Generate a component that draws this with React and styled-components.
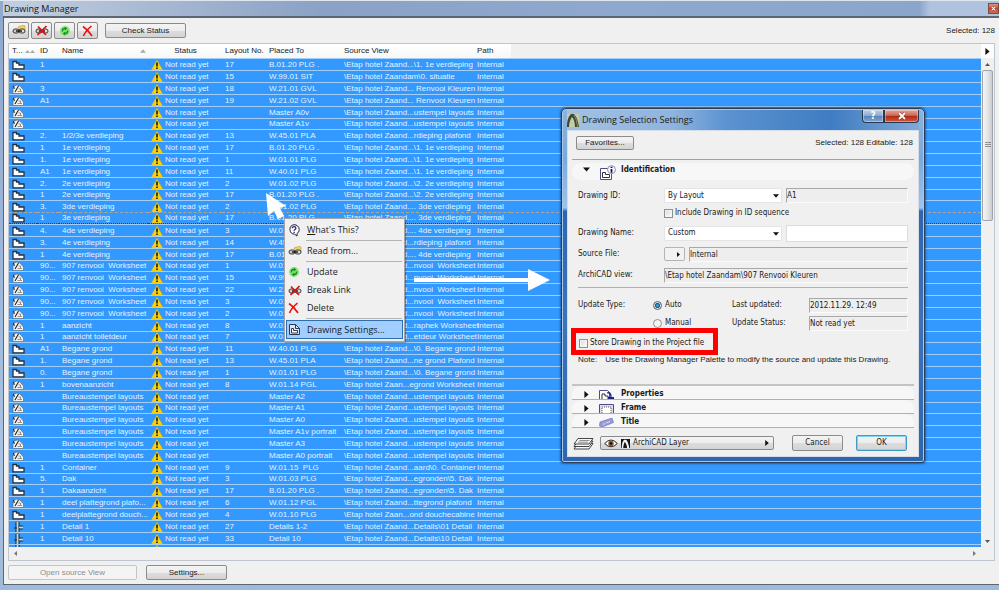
import React from 'react';
import styled, { createGlobalStyle, css } from 'styled-components';

const GlobalStyle = createGlobalStyle`
  *,
  *::before,
  *::after {
    box-sizing: border-box;
  }

  body {
    margin: 0;
    overflow: hidden;
    color: #1a1a1a;
    font-family: 'Liberation Sans', Arial, sans-serif;
    font-size: 8px;
    line-height: 10px;
  }

  button,
  input,
  select {
    font: inherit;
    color: inherit;
  }
`;

const uiFont = "'Open Sans', 'Noto Sans', sans-serif";
const dialogFont = "'DejaVu Sans Condensed', 'DejaVu Sans', sans-serif";

/* ---------- manager window ---------- */

const Desktop = styled.div`
  position: relative;
  height: 100vh;
`;

const ManagerWindow = styled.section`
  display: flex;
  flex-direction: column;
  height: 100%;
  padding: 0 0 5px 3px;
  border-top: 1px solid #dfe6ee;
  background: linear-gradient(#93abcf, #8fa9cf 3%, #a9c4e4 80%, #9fb9d9);
`;

const ManagerTitle = styled.header`
  display: flex;
  justify-content: space-between;
  flex: none;
  height: 15px;
  background: linear-gradient(
    90deg,
    #c3cfdf,
    #a9bad3 14%,
    #8ba2c6 32%,
    #8fa8cd 60%,
    #8ca5cb 92%,
    #afc2df 93%
  );

  h1 {
    margin: 0;
    padding: 1px;
    font-family: ${uiFont};
    font-size: 9px;
    font-weight: 400;
    line-height: 14px;
    color: #10151d;
  }
`;

const CloseBox = styled.button`
  display: flex;
  align-items: center;
  justify-content: center;
  align-self: center;
  width: 11px;
  height: 11px;
  padding: 0;
  border: 1px solid #7a4a44;
  background: linear-gradient(#dc9a84, #c8472b 50%, #d46a48);
`;

const ManagerBody = styled.div`
  display: flex;
  flex: 1;
  flex-direction: column;
  min-height: 0;
  padding: 4px 4px 4px;
  border: solid #5c6672;
  border-width: 2px 0 1px 1px;
  background: #f0f0f0;
`;

const buttonFace = css`
  border: 1px solid #8b8b8b;
  border-radius: 2px;
  background: linear-gradient(#f4f4f4, #ececec 50%, #dddddd 51%, #d3d3d3);
`;

const Toolbar = styled.div`
  display: flex;
  align-items: center;
  flex: none;
  height: 17px;
`;

const ToolButton = styled.button`
  ${buttonFace}
  display: flex;
  align-items: center;
  justify-content: center;
  width: 21px;
  height: 17px;
  margin-right: 2px;
  padding: 0;
`;

const TextButton = styled.button`
  ${buttonFace}
  width: ${({ $width }) => $width}px;
  height: ${({ $height }) => $height || 15}px;
  padding: 0;

  ${({ $default }) =>
    $default &&
    css`
      border-color: #3c9cc4;
      box-shadow: inset 0 0 0 1px #7fd6f2;
    `}

  &:disabled {
    border-color: #c4c4c4;
    background: #f4f4f4;
    color: #8d8d8d;
  }
`;

const CheckStatus = styled(TextButton)`
  margin-left: 5px;
`;

const SelectedCount = styled.span`
  margin-left: auto;
`;

/* ---------- drawing list ---------- */

const ListBox = styled.div`
  display: flex;
  flex: 1;
  flex-direction: column;
  min-height: 0;
  margin: 4px 0;
  border: 1px solid #c0c6cf;
`;

const ListArea = styled.div`
  display: flex;
  flex: 1;
  min-height: 0;
`;

const TableClip = styled.div`
  flex: 1;
  overflow: hidden;
`;

const Table = styled.table`
  width: 100%;
  border-spacing: 0;
  table-layout: fixed;

  th {
    height: 14px;
    padding: 0 0 0 3px;
    background: linear-gradient(#ffffff, #f6f7f8);
    font-weight: 400;
    text-align: left;
    white-space: nowrap;
  }

  th:last-child {
    background: #f0f0f0;
  }

  td {
    height: 12px;
    padding: 0 0 0 3px;
    border-top: 1px solid #a3cff7;
    background: #3399ff;
    color: #e6f2ff;
    line-height: 10px;
    white-space: pre;
  }

  tr:nth-child(6n) td {
    height: 11px;
  }

  td svg {
    display: block;
  }
`;

const Row = styled.tr`
  ${({ $focused }) =>
    $focused &&
    css`
      && td {
        border-top: 1px dashed #b3a58c;
        border-bottom: 1px dotted #1d3f68;
      }
    `}
`;

const HeadCell = styled.span`
  display: flex;
  align-items: center;
  justify-content: ${({ $align }) => $align || 'flex-start'};
  gap: 2px;
  padding-right: 2px;
`;

const SortMarks = styled.span`
  display: flex;
`;

const StatusCell = styled.span`
  display: flex;
  align-items: center;
  gap: 2px;
`;

const ScrollColumn = styled.div`
  display: flex;
  flex-direction: column;
  align-items: center;
  width: 13px;
  background: #f0f0f0;
`;

const PopupArrow = styled.button`
  display: flex;
  align-items: center;
  justify-content: center;
  width: 13px;
  height: 14px;
  padding: 0;
  border: 0;
  background: #fcfcfc;
`;

const ScrollArrow = styled.button`
  display: flex;
  align-items: center;
  justify-content: center;
  width: 13px;
  height: 12px;
  padding: 0;
  border: 0;
  background: none;
`;

const Thumb = styled.div`
  display: flex;
  align-items: center;
  justify-content: center;
  width: 11px;
  height: 30%;
  margin-bottom: auto;
  border: 1px solid #a0a4aa;
  border-radius: 2px;
  background: linear-gradient(90deg, #f5f5f5, #e4e5e6 50%, #cbcdd0);
`;

const HScroll = styled.div`
  display: flex;
  justify-content: space-between;
  flex: none;
  height: 13px;
  padding-right: 13px;
`;

const BottomBar = styled.div`
  display: flex;
  flex: none;
  gap: 9px;
`;

/* ---------- context menu ---------- */

const ContextMenu = styled.ul`
  position: absolute;
  top: 218px;
  left: 284px;
  width: 121px;
  margin: 0;
  padding: 2px 1px;
  border: 1px solid #a5a5a5;
  background: #f0f0f0;
  box-shadow: 1px 1px 1px rgba(0, 0, 0, 0.25);
  font-family: ${uiFont};
  font-size: 9px;
  list-style: none;
`;

const MenuItem = styled.li`
  button {
    display: flex;
    align-items: center;
    width: 100%;
    height: ${({ $active }) => ($active ? 19 : 18)}px;
    padding: 0 1px;
    border: 1px solid transparent;
    background: none;
    text-align: left;
    white-space: nowrap;

    ${({ $active }) =>
      $active &&
      css`
        border-color: #2f6fb0;
        background: #a0cfff;
      `}
  }
`;

const MenuIcon = styled.span`
  display: flex;
  flex: none;
  width: 19px;
`;

const MenuRule = styled.li`
  height: 1px;
  margin: 1px 1px 1px 20px;
  background: #b4b4b4;
`;

const Pointer = styled.svg`
  position: absolute;
  top: 193px;
  left: 266px;
`;

const BigArrow = styled.svg`
  position: absolute;
  top: 269px;
  left: 414px;
`;

/* ---------- settings dialog ---------- */

const Dialog = styled.section`
  position: absolute;
  top: 108px;
  left: 561px;
  width: 364px;
  padding: 0 5px 5px;
  border: 1px solid #2b3d57;
  border-radius: 5px 5px 3px 3px;
  background: linear-gradient(
    #8db2dc,
    #78aae0 14%,
    #9cc3ee 28%,
    #2c66b0 29%,
    #3b74bb 60%,
    #2c66b0
  );
  box-shadow: inset 0 0 0 1px #a9c9ec, 0 0 2px 1px rgba(10, 40, 80, 0.5);
  font-family: ${dialogFont};
`;

const DialogTitle = styled.header`
  display: flex;
  align-items: center;
  gap: 3px;
  height: 20px;
  margin-top: 1px;
  background: linear-gradient(
    90deg,
    #a3c0e2,
    #8fb4df 30%,
    #5c93d0 45%,
    #3f7cc2 75%,
    #7fa9da
  );

  h2 {
    margin: 0;
    font-family: ${uiFont};
    font-size: 9px;
    font-weight: 400;
    line-height: 14px;
  }
`;

const WindowButtons = styled.div`
  display: flex;
  align-self: flex-start;
  margin-left: auto;
`;

const WindowButton = styled.button`
  display: flex;
  align-items: center;
  justify-content: center;
  width: ${({ $close }) => ($close ? 35 : 22)}px;
  height: 13px;
  padding: 0;
  border: 1px solid #26374f;
  border-top: 0;
  border-radius: ${({ $close }) => ($close ? '0 0 4px 0' : '0 0 0 4px')};
  background: ${({ $close }) =>
    $close
      ? 'linear-gradient(#e0a49a, #cf6a58 45%, #b02a16 50%, #cf5a3a)'
      : 'linear-gradient(#b9cde6, #8fb0d6 45%, #5a85b8 50%, #7fa6d2)'};
  box-shadow: inset 0 0 0 1px rgba(255, 255, 255, 0.35);
  color: #ffffff;
  font-size: 10px;
  font-weight: 700;
  line-height: 10px;
`;

const DialogBody = styled.div`
  padding: 5px 4px 2px;
  border: 1px solid #d5dde8;
  background: #f0f0f0;
`;

const DialogTop = styled.div`
  display: flex;
  align-items: center;
  justify-content: space-between;
  padding: 0 1px 9px 4px;
  border-bottom: 1px solid #a2a2a2;
  font-family: 'Liberation Sans', Arial, sans-serif;
`;

const SectionHeader = styled.button`
  display: flex;
  align-items: center;
  width: 100%;
  height: ${({ $open }) => ($open ? 17 : 14)}px;
  margin: ${({ $open }) => ($open ? '3px 0 8px' : '0')};
  padding: ${({ $open }) => ($open ? '0 0 4px 11px' : '3px 0 0 11px')};
  border: 0;
  border-bottom: ${({ $open }) => ($open ? '0' : '1px solid #b0b0b0')};
  border-radius: ${({ $open }) => ($open ? '9px' : '9px 9px 0 0')};
  background: #f7f7f7;
  font-weight: 700;
  text-align: left;
`;

const SectionIcon = styled.span`
  display: flex;
  flex: none;
  width: 22px;
  margin-left: 9px;
  margin-bottom: ${({ $open }) => ($open ? '-6px' : '0')};
`;

const Form = styled.div`
  padding: 0 6px;
`;

const Field = styled.div`
  display: flex;
  align-items: center;
  gap: 4px;
  height: ${({ $height }) => $height || 20}px;
`;

const FieldLabel = styled.label`
  flex: none;
  width: 82px;
`;

const Combo = styled.div`
  position: relative;
  flex: none;
  width: 118px;

  select {
    display: block;
    width: 100%;
    height: 15px;
    padding: 0 16px 0 3px;
    border: 1px solid #e4e4e4;
    border-radius: 1px;
    appearance: none;
    background: #ffffff;
  }

  svg {
    position: absolute;
    top: 5px;
    right: 3px;
    pointer-events: none;
  }
`;

const TextInput = styled.input`
  flex: 1;
  min-width: 0;
  height: ${({ readOnly }) => (readOnly ? 15 : 17)}px;
  padding: 0;
  border: 1px solid #dcdcdc;
  background: #ffffff;

  ${({ readOnly }) =>
    readOnly &&
    css`
      border-color: #a8a8a8 #fbfbfb #fbfbfb #a8a8a8;
      background: #eeeeee;
    `}
`;

const BrowseButton = styled(TextButton)`
  display: flex;
  flex: none;
  align-items: center;
  justify-content: flex-end;
  padding: 0 3px;
  border-color: #b4b4b4;
  background: #f2f2f2;
`;

const Check = styled.label`
  display: flex;
  align-items: center;
  gap: 2px;
  white-space: nowrap;

  input {
    width: 9px;
    height: 9px;
    margin: 0;
    border: 1px solid #8e8f8f;
    appearance: none;
    background: linear-gradient(135deg, #d5d8dc, #ffffff);
    box-shadow: inset 0 0 0 1px #f4f4f4;
  }
`;

const IndentedCheck = styled(Check)`
  height: 20px;
  margin-left: 86px;
`;

const Highlight = styled.div`
  width: 147px;
  margin: -4px 0 0 -7px;
  padding: 5px 3px 2px;
  border: 5px solid #ff0000;
`;

const Rule = styled.hr`
  height: 1px;
  margin: 2px 0 8px;
  border: 0;
  background: #b0b0b0;
`;

const UpdateGrid = styled.div`
  display: grid;
  grid-template-columns: 75px 79px 77px 1fr;
  grid-auto-rows: 18px;
  align-items: center;
`;

const Radio = styled.label`
  display: flex;
  grid-column: 2;
  align-items: center;
  gap: 3px;

  input {
    width: 9px;
    height: 9px;
    margin: 0;
    border: 1px solid #8e8f8f;
    border-radius: 50%;
    appearance: none;
    background: #f4f4f4;
  }

  input:checked {
    border-color: #4f6576;
    background: radial-gradient(#4fb4e6, #17618f 45%, #dfe8ee 60%);
  }
`;

const Note = styled.p`
  display: flex;
  gap: 8px;
  margin: 0;
  padding-bottom: 19px;
  font-family: 'Liberation Sans', Arial, sans-serif;
  white-space: nowrap;
`;

const Sections = styled.div`
  border-top: 2px solid #c4c4c4;
`;

const DialogFooter = styled.footer`
  display: flex;
  align-items: center;
  padding: 7px 7px 3px 1px;
`;

const LayerButton = styled.button`
  ${buttonFace}
  display: flex;
  align-items: center;
  gap: 3px;
  width: 174px;
  height: 14px;
  margin: 0 18px 0 6px;
  padding: 0 3px;

  svg:last-child {
    margin-left: auto;
  }
`;

const FooterButton = styled(TextButton)`
  & + & {
    margin-left: auto;
  }
`;

/* ---------- icons ---------- */

const PlanIcon = () => (
  <svg width="13" height="10" viewBox="0 0 13 10">
    <path
      d="M1 1.500h3.500V3H7v2h5v3.800H1z"
      fill="#fff"
      stroke="#27313c"
      strokeWidth="1.300"
    />
  </svg>
);

const SheetIcon = () => (
  <svg width="13" height="10" viewBox="0 0 13 10">
    <path d="M1 2.500L5 1l3 1 3.500 4v3.500H1z" fill="#f6f4ee" stroke="#5c5c5c" strokeWidth=".6" />
    <path d="M1.500 2l.8 3M3 8l3.500-6" stroke="#222" strokeWidth="1.100" fill="none" />
    <path d="M5.500 7.500h4.500M6.500 5h2v2" stroke="#6a6a6a" strokeWidth=".7" fill="none" />
  </svg>
);

const DetailIcon = () => (
  <svg width="13" height="10" viewBox="0 0 13 10">
    <path d="M4 0v10M7 0v10" stroke="#30302a" strokeWidth="1.200" />
    <path d="M5.500 0v10" stroke="#d9d3ae" strokeWidth="1.600" />
    <path d="M7 4h4M7 7h4M2 6h3" stroke="#30302a" strokeWidth="1" />
    <path d="M7 5.500h4" stroke="#d9d3ae" strokeWidth="1.400" />
  </svg>
);

const WarningIcon = () => (
  <svg width="12" height="10" viewBox="0 0 12 10">
    <path d="M6 0l5.700 10H.3z" fill="#f9d312" stroke="#c9a20c" strokeWidth=".4" />
    <path d="M6 2.600v4M6 7.400v1.500" stroke="#1a1a00" strokeWidth="1.600" />
  </svg>
);

const typeIcons = { plan: PlanIcon, sheet: SheetIcon, detail: DetailIcon };

const ChainIcon = ({ folder, broken }) => (
  <svg width="14" height="11" viewBox="0 0 14 11">
    {folder && (
      <path d="M6 2l2-1h2l1-1 2 1v5l-5 1z" fill="#f3d35f" stroke="#a98b2a" strokeWidth=".5" />
    )}
    <rect x="1" y="4" width="6" height="4" rx="2" fill="#ccc" stroke="#3a3a3a" />
    <rect x="7" y="4" width="6" height="4" rx="2" fill="#ddd" stroke="#3a3a3a" />
    <path d="M4 6h6" stroke="#111" strokeWidth="1.400" />
    {broken && (
      <path d="M3 1.500l8 8.500M11.500 1l-9 9" stroke="#e01212" strokeWidth="1.700" />
    )}
  </svg>
);

const UpdateIcon = () => (
  <svg width="12" height="12" viewBox="0 0 12 12">
    <circle cx="6" cy="6" r="5" fill="#86e86e" />
    <path
      d="M3.500 6.500V5.200Q3.500 3.500 6 3.500M8.500 5.500v1.300Q8.500 8.500 6 8.500"
      fill="none"
      stroke="#1a8a2a"
      strokeWidth="1.400"
    />
    <path d="M5.800 1.500l2.500 2-2.500 2zM6.200 6.500l-2.500 2 2.500 2z" fill="#1a8a2a" />
  </svg>
);

const DeleteIcon = () => (
  <svg width="12" height="12" viewBox="0 0 12 12">
    <path d="M1 1.500c3 2 6 5 9 9.500" stroke="#e81010" strokeWidth="1.600" fill="none" />
    <path d="M9.500 1C6.500 3.500 3 7 1.500 11" stroke="#e81010" strokeWidth="1.600" fill="none" />
  </svg>
);

const HelpIcon = () => (
  <svg width="13" height="13" viewBox="0 0 13 13">
    <path
      d="M6 .7a5 4.800 0 015.200 4.800c0 2-1 3.300-2.200 4v2.600L6.700 10.200A5 4.800 0 016 .7z"
      fill="#fff"
      stroke="#222"
    />
    <path
      d="M4.300 4.200c0-2 3.600-2 3.600 0 0 1.300-1.800 1.300-1.800 2.500M6.100 7.700v1.200"
      fill="none"
      stroke="#26268f"
      strokeWidth="1.300"
    />
  </svg>
);

const InfoIcon = () => (
  <svg width="18" height="16" viewBox="0 0 18 16">
    <path d="M1.500 3.500h11v11h-11z" fill="#fff" stroke="#4c4c86" />
    <path d="M3.500 7.500h3v2h4v3h-7z" fill="none" stroke="#333" />
    <circle cx="12.500" cy="4.700" r="4" fill="#f4f4ff" stroke="#7777b8" strokeWidth=".8" />
    <path d="M12.500 4v3.700M12.500 1.800v1.300" stroke="#111" strokeWidth="1.700" />
  </svg>
);

const DrawingIcon = () => (
  <svg width="13" height="13" viewBox="0 0 13 13">
    <path d="M1.500 1.500h6l4 4v6h-10z" fill="#dce8f8" stroke="#2c3a52" />
    <path d="M7.500 1.500v4h4" fill="none" stroke="#2c3a52" />
    <path d="M3.500 5.500h2v2h4v2.500h-6z" fill="#fff" stroke="#2c3a52" />
  </svg>
);

const PropertiesIcon = () => (
  <svg width="15" height="9" viewBox="0 0 15 9">
    <path d="M.5 9V.5h8l2 2V9" fill="#fff" stroke="#4c4c96" />
    <path d="M3 9V4h3v2h3v3" fill="none" stroke="#333" />
    <path d="M8 3c3-1 4 1 4 4" fill="none" stroke="#22228a" strokeWidth="1.300" />
    <path d="M9 7h6v2H9z" fill="#22228a" />
  </svg>
);

const FrameIcon = () => (
  <svg width="15" height="9" viewBox="0 0 15 9">
    <path d="M.5 9V.5h14V9" fill="#dcdcf2" stroke="#4c4c86" />
    <path d="M3 9V3h9v6" fill="#fff" stroke="#555" strokeDasharray="1 1" />
  </svg>
);

const TitleIcon = () => (
  <svg width="15" height="9" viewBox="0 0 15 9">
    <path d="M1 4l12-4 1.500 4.500L3 9 .5 8z" fill="#9a9ad8" stroke="#7474b8" strokeWidth=".7" />
    <path d="M4 6.500l2-1M7 5l4-1.500" stroke="#dedef6" />
  </svg>
);

const LayersIcon = () => (
  <svg width="21" height="13" viewBox="0 0 21 13">
    <path d="M5 6.500h15l-4 5.500H1z" fill="#f6f6f6" stroke="#333" strokeWidth=".9" />
    <path d="M5 4h15l-4 5.500H1z" fill="#f6f6f6" stroke="#333" strokeWidth=".9" />
    <path d="M5 1.500h15l-4 5.500H1z" fill="#f6f6f6" stroke="#333" strokeWidth=".9" />
    <path d="M6.500 3.500h10M5 5.200h10" stroke="#777" strokeWidth=".8" />
  </svg>
);

const EyeIcon = () => (
  <svg width="14" height="9" viewBox="0 0 14 9">
    <path d="M.7 4.500Q7-2.500 13.300 4.500 7 11 .7 4.500z" fill="#fff" stroke="#222" />
    <circle cx="7" cy="4.500" r="2.700" fill="#8a5a22" />
    <circle cx="7" cy="4.500" r="1.300" fill="#111" />
  </svg>
);

const ArchIcon = () => (
  <svg width="9" height="9" viewBox="0 0 12 12">
    <path d="M0 0h12v12H0z" fill="#151515" />
    <path d="M1 12C1 7 2 3 4 1h3c2 2 3 6 4 11H8C8 9 7 6 5 4 4 6 3 9 3 12z" fill="#f4f4f4" />
  </svg>
);

const AppIcon = () => (
  <svg width="12" height="13" viewBox="0 0 12 13">
    <path d="M0 0h12v13H0z" fill="#c3ccab" />
    <path d="M0 13C0 7 1 3 4 0h3c3 3 4 7 5 13H8C8 9 7 5 5 3 3 6 2 9 2 13z" fill="#3d4a2c" />
    <path d="M7 1c2 3 3 7 3.500 12" fill="none" stroke="#98a57a" strokeWidth=".8" />
  </svg>
);

const Triangle = ({ dir = 'down', size = 5, color = '#111' }) => {
  const shapes = {
    down: 'M0 2h10L5 8z',
    right: 'M2 0v10l6-5z',
    left: 'M8 0v10L2 5z',
    up: 'M0 8h10L5 2z',
  };
  return (
    <svg width={size} height={size} viewBox="0 0 10 10">
      <path d={shapes[dir]} fill={color} />
    </svg>
  );
};

const Cross = ({ size = 8 }) => (
  <svg width={size} height={size} viewBox="0 0 8 8">
    <path d="M1 1l6 6M7 1L1 7" stroke="#7c2a20" strokeWidth="2.800" />
    <path d="M1 1l6 6M7 1L1 7" stroke="#fff" strokeWidth="1.800" />
  </svg>
);

const Grip = () => (
  <svg width="6" height="6" viewBox="0 0 6 6">
    <path d="M0 .5h6M0 2.500h6M0 4.500h6" stroke="#8c9096" />
  </svg>
);

/* ---------- data ---------- */

const etap = (rest, head = 'Zaand') => `\\Etap hotel ${head}...${rest}`;
const tempel = (placed, name = 'Bureaustempel layouts') => [
  'sheet',
  '',
  name,
  '',
  placed,
  etap('ustempel layouts'),
];
const renvooi = (no, placed) => [
  'sheet',
  '90...',
  '907 renvooi  Worksheet',
  no,
  placed,
  etap('nvooi  Worksheet'),
];

// type, id, name, layout no., placed to, source view
const drawings = [
  ['plan', '1', '', '17', 'B.01.20 PLG .', etap('\\1. 1e verdieping')],
  ['plan', '', '', '15', 'W.99.01 SIT', '\\Etap hotel Zaandam\\0. situatie'],
  ['sheet', '3', '', '18', 'W.21.01 GVL', etap(' Renvooi Kleuren')],
  ['sheet', 'A1', '', '19', 'W.21.02 GVL', etap(' Renvooi Kleuren')],
  tempel('Master A0v', ''),
  tempel('Master A1v', ''),
  ['plan', '2.', '1/2/3e verdieping', '13', 'W.45.01 PLA', etap('rdieping plafond')],
  ['plan', '1', '1e verdieping', '17', 'B.01.20 PLG .', etap('\\1. 1e verdieping')],
  ['plan', '1.', '1e verdieping', '1', 'W.01.01 PLG', etap('\\1. 1e verdieping')],
  ['plan', 'A1', '1e verdieping', '11', 'W.40.01 PLG', etap('\\1. 1e verdieping')],
  ['plan', '2.', '2e verdieping', '2', 'W.01.02 PLG', etap('\\2. 2e verdieping')],
  ['plan', '1', '2e verdieping', '17', 'B.01.20 PLG .', etap('\\2. 2e verdieping')],
  ['plan', '3.', '3de verdieping', '2', 'W.01.02 PLG', etap('. 3de verdieping')],
  ['plan', '1', '3e verdieping', '17', 'B.01.20 PLG', etap('. 3de verdieping')],
  ['plan', '4.', '4de verdieping', '3', 'W.01.03 PLG', etap('. 4de verdieping')],
  ['plan', '3.', '4e verdieping', '14', 'W.45.02 PLA', etap('rdieping plafond')],
  ['plan', '1', '4e verdieping', '17', 'B.01.20 PLG', etap('. 4de verdieping')],
  renvooi('1', 'W.01.01 PLG'),
  renvooi('15', 'W.99.01 SIT'),
  renvooi('22', 'W.21.05 GVL'),
  renvooi('3', 'W.01.03 PLG'),
  renvooi('2', 'W.01.02 PLG'),
  ['sheet', '1', 'aanzicht', '8', 'W.01.14 PGL', etap('raphek Worksheet')],
  ['sheet', '1', 'aanzicht toiletdeur', '7', 'W.01.13 PGL', etap('etdeur Worksheet')],
  ['plan', 'A1', 'Begane grond', '11', 'W.40.01 PLG', etap('\\0. Begane grond')],
  ['plan', '1.', 'Begane grond', '13', 'W.45.01 PLA', etap('ne grond Plafond')],
  ['plan', '0.', 'Begane grond', '1', 'W.01.01 PLG', etap('\\0. Begane grond')],
  ['sheet', '1', 'bovenaanzicht', '8', 'W.01.14 PGL', etap('egrond Worksheet', 'Zaan')],
  tempel('Master A2'),
  tempel('Master A1'),
  tempel('Master A0'),
  tempel('Master A1v portrait'),
  tempel('Master A3'),
  tempel('Master A0 portrait'),
  ['plan', '1', 'Container', '9', 'W.01.15  PLG', etap('aard\\0. Container')],
  ['plan', '5.', 'Dak', '3', 'W.01.03 PLG', etap('egronden\\5. Dak')],
  ['plan', '1', 'Dakaanzicht', '17', 'B.01.20 PLG .', etap('egronden\\5. Dak')],
  ['sheet', '1', 'deel plattegrond plafo...', '6', 'W.01.12 PGL', etap('ttegrond plafond')],
  ['plan', '1', 'deelplattegrond douch...', '4', 'W.01.10 PLG', etap('ond douchecabine', 'Zaan')],
  ['detail', '1', 'Detail 1', '27', 'Details 1-2', etap('Details\\01 Detail')],
  ['detail', '1', 'Detail 10', '33', 'Detail 10', etap('Details\\10 Detail')],
  ['detail', '1', 'Detail 11', '34', 'Detail 11', etap('Details\\11 Detail')],
];

const FOCUSED_ROW = 13;
const columnWidths = [28, 22, 89, 74, 44, 75, 133, 37];

const DrawingTable = () => (
  <Table>
    <colgroup>
      {columnWidths.map((width, i) => (
        <col key={i} width={width} />
      ))}
      <col />
    </colgroup>
    <thead>
      <tr>
        <th>
          <HeadCell $align="space-between">
            T...
            <SortMarks>
              <Triangle dir="up" color="#aaa" />
              <Triangle dir="up" color="#aaa" />
            </SortMarks>
          </HeadCell>
        </th>
        <th>ID</th>
        <th>
          <HeadCell $align="space-between">
            Name
            <Triangle dir="up" color="#aaa" size={6} />
          </HeadCell>
        </th>
        <th>
          <HeadCell $align="center">Status</HeadCell>
        </th>
        <th>Layout No.</th>
        <th>Placed To</th>
        <th>Source View</th>
        <th>Path</th>
        <th aria-label="More" />
      </tr>
    </thead>
    <tbody>
      {drawings.map(([type, id, name, no, placed, source], i) => {
        const Icon = typeIcons[type];
        return (
          <Row key={i} $focused={i === FOCUSED_ROW}>
            <td>
              <Icon />
            </td>
            <td>{id}</td>
            <td>{name}</td>
            <td>
              <StatusCell>
                <WarningIcon />
                Not read yet
              </StatusCell>
            </td>
            <td>{no}</td>
            <td>{placed}</td>
            <td>{source}</td>
            <td>Internal</td>
            <td />
          </Row>
        );
      })}
    </tbody>
  </Table>
);

const DrawingManager = () => (
  <ManagerWindow>
    <ManagerTitle>
      <h1>Drawing Manager</h1>
      <CloseBox aria-label="Close">
        <Cross size={5} />
      </CloseBox>
    </ManagerTitle>
    <ManagerBody>
      <Toolbar>
        <ToolButton aria-label="Read from">
          <ChainIcon folder />
        </ToolButton>
        <ToolButton aria-label="Break link">
          <ChainIcon broken />
        </ToolButton>
        <ToolButton aria-label="Update">
          <UpdateIcon />
        </ToolButton>
        <ToolButton aria-label="Delete">
          <DeleteIcon />
        </ToolButton>
        <CheckStatus $width={81}>Check Status</CheckStatus>
        <SelectedCount>Selected: 128</SelectedCount>
      </Toolbar>
      <ListBox>
        <ListArea>
          <TableClip>
            <DrawingTable />
          </TableClip>
          <ScrollColumn>
            <PopupArrow aria-label="Columns">
              <Triangle dir="right" size={7} />
            </PopupArrow>
            <ScrollArrow aria-label="Scroll up">
              <Triangle dir="up" color="#555" />
            </ScrollArrow>
            <Thumb>
              <Grip />
            </Thumb>
            <ScrollArrow aria-label="Scroll down">
              <Triangle color="#555" />
            </ScrollArrow>
          </ScrollColumn>
        </ListArea>
        <HScroll>
          <ScrollArrow aria-label="Scroll left">
            <Triangle dir="left" color="#777" />
          </ScrollArrow>
          <ScrollArrow aria-label="Scroll right">
            <Triangle dir="right" color="#777" />
          </ScrollArrow>
        </HScroll>
      </ListBox>
      <BottomBar>
        <TextButton $width={129} disabled>
          Open source View
        </TextButton>
        <TextButton $width={81}>Settings...</TextButton>
      </BottomBar>
    </ManagerBody>
  </ManagerWindow>
);

const DrawingMenu = () => (
  <ContextMenu>
    <MenuItem>
      <button>
        <MenuIcon>
          <HelpIcon />
        </MenuIcon>
        <span>
          <u>W</u>hat's This?
        </span>
      </button>
    </MenuItem>
    <MenuRule />
    <MenuItem>
      <button>
        <MenuIcon>
          <ChainIcon folder />
        </MenuIcon>
        Read from...
      </button>
    </MenuItem>
    <MenuRule />
    <MenuItem>
      <button>
        <MenuIcon>
          <UpdateIcon />
        </MenuIcon>
        Update
      </button>
    </MenuItem>
    <MenuItem>
      <button>
        <MenuIcon>
          <ChainIcon broken />
        </MenuIcon>
        Break Link
      </button>
    </MenuItem>
    <MenuItem>
      <button>
        <MenuIcon>
          <DeleteIcon />
        </MenuIcon>
        Delete
      </button>
    </MenuItem>
    <MenuRule />
    <MenuItem $active>
      <button>
        <MenuIcon>
          <DrawingIcon />
        </MenuIcon>
        Drawing Settings...
      </button>
    </MenuItem>
  </ContextMenu>
);

const Section = ({ icon, title, open }) => (
  <SectionHeader $open={open} aria-expanded={!!open}>
    <Triangle dir={open ? 'down' : 'right'} size={7} />
    <SectionIcon $open={open}>{icon}</SectionIcon>
    {title}
  </SectionHeader>
);

const SettingsDialog = () => (
  <Dialog role="dialog" aria-labelledby="dialog-title">
    <DialogTitle>
      <AppIcon />
      <h2 id="dialog-title">Drawing Selection Settings</h2>
      <WindowButtons>
        <WindowButton>?</WindowButton>
        <WindowButton $close aria-label="Close">
          <Cross />
        </WindowButton>
      </WindowButtons>
    </DialogTitle>
    <DialogBody>
      <DialogTop>
        <TextButton $width={58} $height={14}>
          Favorites...
        </TextButton>
        <span>Selected: 128 Editable: 128</span>
      </DialogTop>
      <Section open icon={<InfoIcon />} title="Identification" />
      <Form>
        <Field $height={15}>
          <FieldLabel htmlFor="drawing-id">Drawing ID:</FieldLabel>
          <Combo>
            <select id="drawing-id">
              <option>By Layout</option>
            </select>
            <Triangle size={6} />
          </Combo>
          <TextInput readOnly aria-label="ID" defaultValue="A1" />
        </Field>
        <IndentedCheck>
          <input type="checkbox" />
          Include Drawing in ID sequence
        </IndentedCheck>
        <Field>
          <FieldLabel htmlFor="drawing-name">Drawing Name:</FieldLabel>
          <Combo>
            <select id="drawing-name">
              <option>Custom</option>
            </select>
            <Triangle size={6} />
          </Combo>
          <TextInput aria-label="Name" />
        </Field>
        <Field $height={22}>
          <FieldLabel htmlFor="source-file">Source File:</FieldLabel>
          <BrowseButton $width={21} $height={14} aria-label="Browse">
            <Triangle dir="right" />
          </BrowseButton>
          <TextInput readOnly id="source-file" defaultValue="Internal" />
        </Field>
        <Field>
          <FieldLabel htmlFor="view">ArchiCAD view:</FieldLabel>
          <TextInput readOnly id="view" defaultValue={'\\Etap hotel Zaandam\\907 Renvooi Kleuren'} />
        </Field>
        <Rule />
        <UpdateGrid>
          <span>Update Type:</span>
          <Radio>
            <input type="radio" name="update" defaultChecked />
            Auto
          </Radio>
          <label htmlFor="last-updated">Last updated:</label>
          <TextInput readOnly id="last-updated" defaultValue="2012.11.29. 12:49" />
          <Radio>
            <input type="radio" name="update" />
            Manual
          </Radio>
          <label htmlFor="update-status">Update Status:</label>
          <TextInput readOnly id="update-status" defaultValue="Not read yet" />
        </UpdateGrid>
        <Highlight>
          <Check>
            <input type="checkbox" />
            Store Drawing in the Project file
          </Check>
        </Highlight>
        <Note>
          <span>Note:</span>
          <span>Use the Drawing Manager Palette to modify the source and update this Drawing.</span>
        </Note>
      </Form>
      <Sections>
        <Section icon={<PropertiesIcon />} title="Properties" />
        <Section icon={<FrameIcon />} title="Frame" />
        <Section icon={<TitleIcon />} title="Title" />
      </Sections>
      <DialogFooter>
        <LayersIcon />
        <LayerButton>
          <EyeIcon />
          <ArchIcon />
          ArchiCAD Layer
          <Triangle dir="right" size={6} />
        </LayerButton>
        <FooterButton $width={51} $height={16}>
          Cancel
        </FooterButton>
        <FooterButton $width={51} $height={16} $default>
          OK
        </FooterButton>
      </DialogFooter>
    </DialogBody>
  </Dialog>
);

const App = () => (
  <Desktop>
    <GlobalStyle />
    <DrawingManager />
    <Pointer width="22" height="27" viewBox="0 0 22 27">
      <path d="M0 0l20 13-6 2 4 8-6 3-4-8-6 5z" fill="#fff" />
    </Pointer>
    <DrawingMenu />
    <BigArrow width="137" height="22" viewBox="0 0 137 22">
      <path d="M0 9h114V0l22 11-22 11v-9H0z" fill="#fff" />
    </BigArrow>
    <SettingsDialog />
  </Desktop>
);

export default App;
